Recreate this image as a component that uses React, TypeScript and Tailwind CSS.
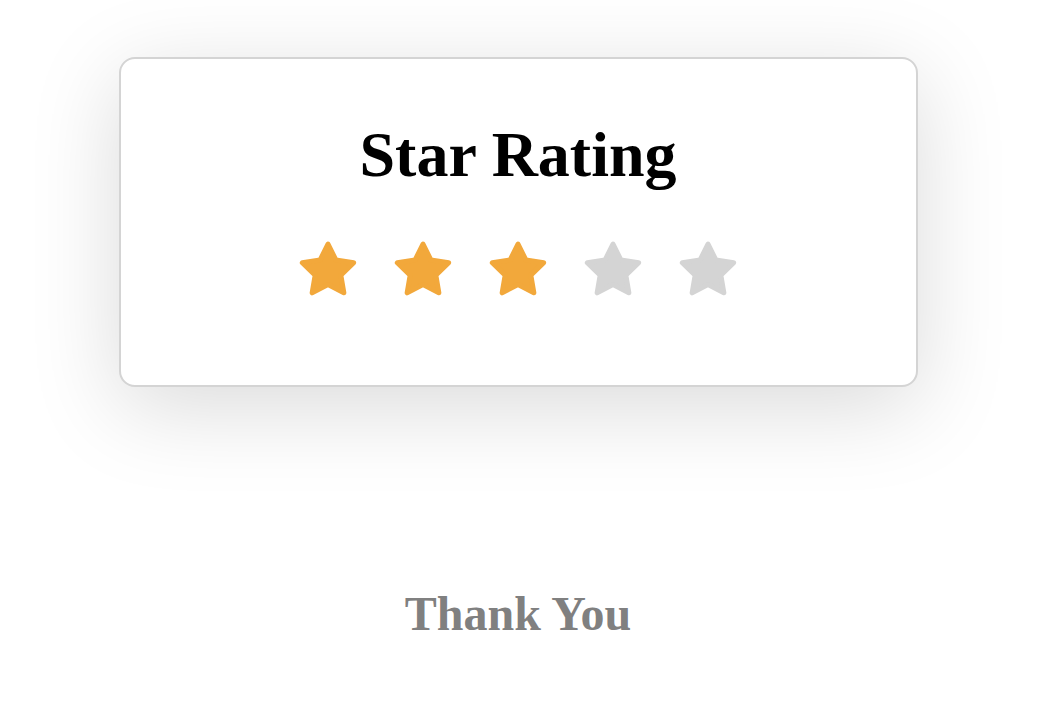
import React from "react";

function starPoints(cx: number, cy: number, R: number, r: number) {
  const pts: string[] = [];
  for (let i = 0; i < 10; i++) {
    const rad = i % 2 === 0 ? R : r;
    const a = (Math.PI / 5) * i - Math.PI / 2;
    pts.push(`${(cx + rad * Math.cos(a)).toFixed(2)},${(cy + rad * Math.sin(a)).toFixed(2)}`);
  }
  return pts.join(" ");
}

function Star({ filled }: { filled: boolean }) {
  const color = filled ? "#f2a83b" : "#d4d4d4";
  return (
    <svg width="60" height="58" viewBox="0 0 60 58">
      <polygon
        points={starPoints(30, 31, 27, 13.5)}
        fill={color}
        stroke={color}
        strokeWidth="5"
        strokeLinejoin="round"
      />
    </svg>
  );
}

export default function App() {
  return (
    <div className="w-[1036px] min-h-[710px] bg-white flex flex-col items-center" style={{ fontFamily: '"Liberation Serif", "Times New Roman", serif' }}>
      <div className="mt-[57px] w-[799px] h-[330px] rounded-[16px] border-2 border-[#d4d4d4] bg-white shadow-[0_20px_90px_rgba(0,0,0,0.15)] flex flex-col items-center pt-[64px]">
        <h1 className="text-[64px] leading-[64px] font-bold text-black">Star Rating</h1>
        <div className="mt-[53px] flex gap-[35px]">
          {[0, 1, 2, 3, 4].map((i) => (
            <Star key={i} filled={i < 3} />
          ))}
        </div>
      </div>
      <div className="mt-[203px] text-[48px] leading-[48px] font-bold text-[#808080]">Thank You</div>
    </div>
  );
}
